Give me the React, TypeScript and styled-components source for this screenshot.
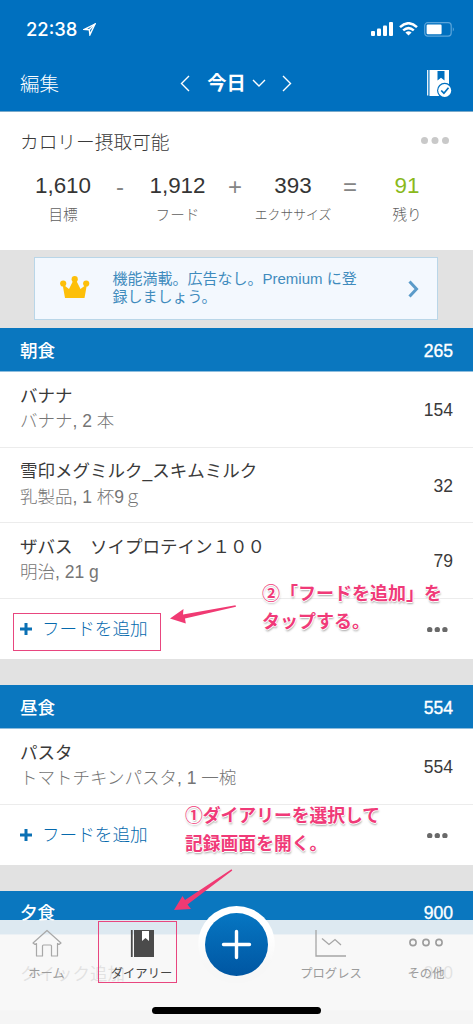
import React from "react";
import styled, { createGlobalStyle } from "styled-components";

const GlobalStyle = createGlobalStyle`
  * { box-sizing: border-box; }
  body {
    margin: 0;
    background: #e2e2e2;
    font-family: "Liberation Sans", "Noto Sans CJK JP", sans-serif;
    color: #3a3a3a;
  }
  svg { display: block; flex: none; }
`;

const Screen = styled.div`
  position: relative;
  width: 473px;
  height: 1024px;
  overflow: hidden;
  background: #e2e2e2;
`;

const TopArea = styled.header`
  height: 112px;
  background: #0070bf;
  border-bottom: 1px solid #79a9c9;
  color: #fff;
`;

const StatusBar = styled.div`
  height: 56px;
  padding: 2px 18px 0 26px;
  display: flex;
  align-items: center;
`;

const Clock = styled.span`
  font: 500 18.4px/20px Inter, sans-serif;
  width: 53px;
  margin-right: 4px;
  white-space: nowrap;
`;

const StatusIcons = styled.div`
  margin-left: auto;
  display: flex;
  align-items: center;
  gap: 6px;
`;

const NavBar = styled.div`
  height: 55px;
  padding: 0 21px 0 20px;
  display: grid;
  grid-template-columns: 1fr auto 1fr;
  align-items: center;
`;

const EditButton = styled.span`
  font-size: 19.5px;
  line-height: 28px;
  font-weight: 300;
`;

const DayPicker = styled.div`
  display: flex;
  align-items: center;
`;

const DayName = styled.span`
  margin: 0 6px 0 17px;
  font-size: 19.3px;
  line-height: 28px;
  font-weight: 700;
`;

const NextDay = styled.div`
  margin-left: 16px;
`;

const DiaryButton = styled.div`
  justify-self: end;
`;

const Summary = styled.section`
  height: 138px;
  background: #fff;
  padding: 16px 0 0 20px;
`;

const SummaryTop = styled.div`
  display: flex;
  justify-content: space-between;
  align-items: center;
  height: 30px;
  padding-right: 24px;
`;

const SummaryMore = styled.div`
  margin-bottom: 6px;
`;

const SummaryTitle = styled.span`
  font-size: 18.7px;
  font-weight: 300;
  line-height: 30px;
`;

const Equation = styled.div`
  display: grid;
  grid-template-columns: 86px 28px 87px 28px 88px 26px 88px;
  margin-top: 15px;
`;

const Term = styled.div<{ $good?: boolean }>`
  text-align: center;
  font-size: 22.4px;
  line-height: 26px;
  color: ${(p) => (p.$good ? "#8ab91c" : "#353535")};
`;

const TermLabel = styled.div<{ $small?: boolean }>`
  margin-top: 4px;
  font-size: ${(p) => (p.$small ? "12.8px" : "14.6px")};
  line-height: 24px;
  font-weight: 300;
  color: #606060;
  white-space: nowrap;
`;

const Operator = styled.div`
  text-align: center;
  font-size: 24px;
  line-height: 28px;
  color: #858585;
`;

const BannerWrap = styled.div`
  height: 78px;
  padding: 7px 35px 0 34px;
`;

const Banner = styled.div`
  height: 63px;
  border: 1px solid #b9d6e8;
  background: #f3f8fe;
  display: flex;
  align-items: center;
  padding: 0 18px 0 25px;
`;

const Crown = styled.svg`
  margin-bottom: 4px;
`;

const BannerText = styled.p`
  margin: -2px auto 0 22.5px;
  font-size: 15px;
  line-height: 17.5px;
  color: #3f8bbd;
  white-space: nowrap;
`;

const Meal = styled.section`
  margin-bottom: 26.3px;
  background: #fff;
`;

const MealHeader = styled.div`
  height: 44px;
  padding: 2px 20px 0;
  display: flex;
  justify-content: space-between;
  align-items: center;
  background: #0a77bf;
  border-bottom: 1px solid #8ebddd;
  color: #fff;
  font-size: 17.6px;
  font-weight: 500;
  line-height: 26px;
`;

const MealTotal = styled.span`
  -webkit-text-stroke: 0.35px #fff;
`;

const FoodRow = styled.div`
  height: 75.6px;
  padding: 0 20px;
  display: flex;
  justify-content: space-between;
  align-items: center;
  border-bottom: 1px solid #ececec;
  font-size: 17.5px;
`;

const FoodText = styled.div`
  line-height: 25.4px;
  white-space: pre;
  margin-top: -0.6px;
`;

const FoodDetail = styled.div`
  color: #757575;
  font-weight: 300;
`;

const FoodValue = styled.span`
  margin-top: 3px;
`;

const AddRow = styled.div`
  height: 60px;
  padding: 1.4px 25px 0 20px;
  display: flex;
  align-items: center;
`;

const AddLabel = styled.span`
  margin: 0 auto 0 10px;
  font-size: 17.6px;
  line-height: 26px;
  color: #0569ad;
  font-weight: 300;
`;

const TabBar = styled.nav`
  position: absolute;
  left: 0;
  right: 0;
  bottom: 0;
  height: 104.5px;
  background: rgba(247, 247, 247, 0.89);
  display: grid;
  grid-template-columns: 93px 97px 93px 96px 94px;
`;

const Tab = styled.div<{ $active?: boolean }>`
  display: flex;
  flex-direction: column;
  align-items: center;
  padding-top: 9px;
  color: ${(p) => (p.$active ? "#454545" : "#9c9c9c")};
`;

const TabLabel = styled.span`
  margin-top: 5px;
  font-size: 12.3px;
  line-height: 20px;
`;

const AddButton = styled.div`
  position: absolute;
  left: 198px;
  top: 906px;
  width: 77px;
  height: 77px;
  border-radius: 50%;
  border: 7px solid transparent;
  background:
    linear-gradient(#0676c2, #0056a2) padding-box,
    linear-gradient(#fff 35%, #f7f7f7 75%) border-box;
  display: grid;
  place-items: center;
`;

const HomeIndicator = styled.div`
  position: absolute;
  left: 152px;
  bottom: 10px;
  width: 169px;
  height: 7px;
  border-radius: 4px;
  background: #000;
`;

const Highlight = styled.div<{ $x: number; $y: number; $w: number; $h: number }>`
  position: absolute;
  left: ${(p) => p.$x}px;
  top: ${(p) => p.$y}px;
  width: ${(p) => p.$w}px;
  height: ${(p) => p.$h}px;
  border: 1px solid #e8467f;
`;

const Note = styled.p<{ $x: number; $y: number; $size: number }>`
  position: absolute;
  left: ${(p) => p.$x}px;
  top: ${(p) => p.$y}px;
  margin: 0;
  font: 700 ${(p) => p.$size}px/28px "Noto Sans CJK JP", sans-serif;
  color: #f03a78;
  white-space: nowrap;
  text-shadow: 1px 0 #fff, -1px 0 #fff, 0 1px #fff, 0 -1px #fff, 0.5px 1.5px 2px rgba(0, 0, 0, 0.35);
`;

const ArrowLayer = styled.svg<{ $x: number; $y: number }>`
  position: absolute;
  left: ${(p) => p.$x}px;
  top: ${(p) => p.$y}px;
`;

const Dots = ({ color, r, step }: { color: string; r: number; step: number }) => (
  <svg width={step * 2 + r * 2} height={r * 2}>
    {[0, 1, 2].map((i) => (
      <circle key={i} cx={r + i * step} cy={r} r={r} fill={color} />
    ))}
  </svg>
);

const Chevron = ({ d, w, h, width = 1.4, color = "#fff" }: { d: string; w: number; h: number; width?: number; color?: string }) => (
  <svg width={w} height={h} fill="none" stroke={color} strokeWidth={width}>
    <path d={d} />
  </svg>
);

const AddFood = () => (
  <AddRow>
    <svg width="12" height="12" stroke="#0a70b4" strokeWidth="3">
      <path d="M6 0V12M0 6H12" />
    </svg>
    <AddLabel>フードを追加</AddLabel>
    <Dots color="#696969" r={2.7} step={7.6} />
  </AddRow>
);

type Food = { name: string; detail: string; kcal: number };

const MealBlock = ({ title, total, foods }: { title: string; total: number; foods: Food[] }) => (
  <Meal>
    <MealHeader>
      <span>{title}</span>
      <MealTotal>{total}</MealTotal>
    </MealHeader>
    {foods.map((f) => (
      <FoodRow key={f.name}>
        <FoodText>
          <div>{f.name}</div>
          <FoodDetail>{f.detail}</FoodDetail>
        </FoodText>
        <FoodValue>{f.kcal}</FoodValue>
      </FoodRow>
    ))}
    <AddFood />
  </Meal>
);

const breakfast: Food[] = [
  { name: "バナナ", detail: "バナナ, 2 本", kcal: 154 },
  { name: "雪印メグミルク_スキムミルク", detail: "乳製品, 1 杯9ｇ", kcal: 32 },
  { name: "ザバス　ソイプロテイン１００", detail: "明治, 21 g", kcal: 79 },
];

const lunch: Food[] = [{ name: "パスタ", detail: "トマトチキンパスタ, 1 一椀", kcal: 554 }];

export default function App() {
  return (
    <Screen>
      <GlobalStyle />
      <TopArea>
        <StatusBar>
          <Clock>22:38</Clock>
          <svg width="13" height="13" fill="none" stroke="#fff" strokeWidth="1.4">
            <path d="M12 1L1.5 6.3L6.3 6.7L6.9 11.8Z" />
            <path d="M12 1L6.3 6.7" />
          </svg>
          <StatusIcons>
            <svg width="22" height="14" fill="#fff">
              <rect x="0" y="9" width="4" height="5" rx="1" />
              <rect x="6" y="6.5" width="4" height="7.5" rx="1" />
              <rect x="12" y="3.5" width="4" height="10.5" rx="1" />
              <rect x="18" y="0" width="4" height="14" rx="1" />
            </svg>
            <svg width="19" height="14" fill="none" stroke="#fff" strokeWidth="2.5">
              <path d="M1 5.2Q9.5 -2.7 18 5.2M4.2 8.4Q9.5 3.8 14.8 8.4" />
              <path d="M6.4 10.5Q9.5 8 12.6 10.5L9.5 13.6Z" fill="#fff" stroke="none" />
            </svg>
            <svg width="31" height="15">
              <rect x="0.7" y="0.7" width="26.5" height="13.4" rx="3" fill="none" stroke="#5ba5db" strokeWidth="1.2" />
              <rect x="2.6" y="2.6" width="15" height="9.6" rx="1.2" fill="#fff" />
              <path d="M28.8 5.2Q31 7.4 28.8 9.6Z" fill="#5ba5db" />
            </svg>
          </StatusIcons>
        </StatusBar>
        <NavBar>
          <EditButton>編集</EditButton>
          <DayPicker>
            <Chevron d="M9 1L1.5 8.5L9 16" w={10} h={17} />
            <DayName>今日</DayName>
            <Chevron d="M1 1L7 7L13 1" w={14} h={9} />
            <NextDay>
              <Chevron d="M1 1L8.5 8.5L1 16" w={10} h={17} />
            </NextDay>
          </DayPicker>
          <DiaryButton>
            <svg width="26" height="29">
              <path d="M1.7 1V26.5" stroke="#fff" strokeWidth="1.2" />
              <path d="M3.5 1H23V27H3.5Z" fill="#fff" />
              <path d="M11.5 2H18.5V11.5L15 8.8L11.5 11.5Z" fill="#0070bf" />
              <circle cx="18.7" cy="21.5" r="7.7" fill="#0070bf" />
              <circle cx="18.7" cy="21.5" r="6.5" fill="#fff" />
              <path d="M15.2 21.5L17.9 24.2L22.5 18.8" fill="none" stroke="#0070bf" strokeWidth="1.7" />
            </svg>
          </DiaryButton>
        </NavBar>
      </TopArea>

      <Summary>
        <SummaryTop>
          <SummaryTitle>カロリー摂取可能</SummaryTitle>
          <SummaryMore>
            <Dots color="#c9c9c9" r={3.5} step={10.5} />
          </SummaryMore>
        </SummaryTop>
        <Equation>
          <Term>1,610<TermLabel>目標</TermLabel></Term>
          <Operator>-</Operator>
          <Term>1,912<TermLabel>フード</TermLabel></Term>
          <Operator>+</Operator>
          <Term>393<TermLabel $small>エクササイズ</TermLabel></Term>
          <Operator>=</Operator>
          <Term $good>91<TermLabel>残り</TermLabel></Term>
        </Equation>
      </Summary>

      <BannerWrap>
        <Banner>
          <Crown width="30" height="22" fill="#fdbf09">
            <circle cx="3.2" cy="7.5" r="3.1" />
            <circle cx="14.7" cy="3.2" r="3.1" />
            <circle cx="26.2" cy="7.5" r="3.1" />
            <path d="M2.5 8L9 13L13.5 4H16L20.5 13L27 8L24.5 22H5Z" />
          </Crown>
          <BannerText>
            機能満載。広告なし。Premium に登
            <br />
            録しましょう。
          </BannerText>
          <Chevron d="M1.5 1.5L8.5 9L1.5 16.5" w={11} h={18} width={3} color="#5b9bc9" />
        </Banner>
      </BannerWrap>

      <MealBlock title="朝食" total={265} foods={breakfast} />
      <MealBlock title="昼食" total={554} foods={lunch} />
      <Meal>
        <MealHeader>
          <span>夕食</span>
          <MealTotal>900</MealTotal>
        </MealHeader>
        <FoodRow>
          <span>クイック追加</span>
          <FoodValue>900</FoodValue>
        </FoodRow>
      </Meal>

      <TabBar>
        <Tab>
          <svg width="30" height="30" fill="none" stroke="#a8a8a8" strokeWidth="1.2" strokeLinejoin="round">
            <path d="M1 14L15 1.5L29 14L27 15.5L25.5 14.5V27H19.5V17Q19.5 16 18.5 16H11.5Q10.5 16 10.5 17V27H4.5V14.5L3 15.5Z" />
          </svg>
          <TabLabel>ホーム</TabLabel>
        </Tab>
        <Tab $active>
          <svg width="24" height="30">
            <path d="M1.8 1V28" stroke="#4b4b4b" strokeWidth="1.8" />
            <path d="M4 1H24V28H4Z" fill="#4b4b4b" />
            <path d="M12 2H19V12L15.5 9L12 12Z" fill="#fff" />
          </svg>
          <TabLabel>ダイアリー</TabLabel>
        </Tab>
        <span />
        <Tab>
          <svg width="32" height="30" fill="none" stroke="#a5a5a5" strokeWidth="1.3">
            <path d="M1 1V27H31M7 9.5L14 15.5L20 10.5L26 16" />
          </svg>
          <TabLabel>プログレス</TabLabel>
        </Tab>
        <Tab>
          <svg width="34" height="30" fill="none" stroke="#9c9c9c" strokeWidth="1.6">
            <circle cx="4" cy="13.5" r="3.1" />
            <circle cx="17" cy="13.5" r="3.1" />
            <circle cx="30" cy="13.5" r="3.1" />
          </svg>
          <TabLabel>その他</TabLabel>
        </Tab>
      </TabBar>
      <AddButton>
        <svg width="31" height="31" stroke="#fff" strokeWidth="3.4" strokeLinecap="round">
          <path d="M15.5 2.5V28.5M2.5 15.5H28.5" />
        </svg>
      </AddButton>
      <HomeIndicator />

      <Highlight $x={13} $y={613} $w={148} $h={38} />
      <Highlight $x={98} $y={921} $w={79} $h={62} />
      <Note $x={262} $y={578} $size={18}>
        ②「フードを追加」を
        <br />
        タップする。
      </Note>
      <Note $x={185} $y={800} $size={17.8}>
        ①ダイアリーを選択して
        <br />
        記録画面を開く。
      </Note>
      <ArrowLayer $x={168} $y={603} width={70} height={22} fill="#f03a73">
        <path d="M2 15.5L15.5 6L15 11.5L67.5 2.3L68 3.8L17 15.5L17.8 20.5Z" />
      </ArrowLayer>
      <ArrowLayer $x={172} $y={867} width={62} height={46} fill="#f03a73">
        <path d="M2 43L10.5 29L13 33L59.5 2.3L60.3 3.5L15.5 37.5L19 42Z" />
      </ArrowLayer>
    </Screen>
  );
}
